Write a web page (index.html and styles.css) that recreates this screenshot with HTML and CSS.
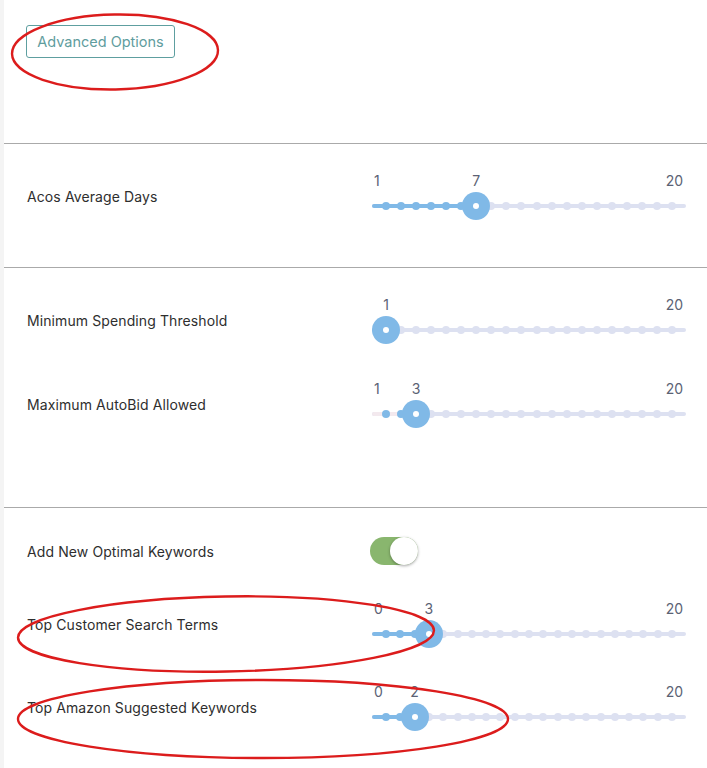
FILE: index.html
```html
<!DOCTYPE html>
<html lang="en">
<head>
    <meta charset="UTF-8">
    <meta name="viewport" content="width=device-width, initial-scale=1.0">
    <title>Advanced Options</title>
    <link rel="stylesheet" href="styles.css">
</head>
<body>
    <div class="panel">
        <div class="section top-section">
            <button class="advanced-button">Advanced Options</button>
        </div>

        <div class="section acos-section">
            <div class="setting-row">
                <span class="setting-label">Acos Average Days</span>
                <div class="slider" data-min="1" data-max="20" data-value="7"></div>
            </div>
        </div>

        <div class="section limits-section">
            <div class="setting-row">
                <span class="setting-label">Minimum Spending Threshold</span>
                <div class="slider" data-min="1" data-max="20" data-value="1"></div>
            </div>
            <div class="setting-row">
                <span class="setting-label">Maximum AutoBid Allowed</span>
                <div class="slider faded" data-min="1" data-max="20" data-value="3"></div>
            </div>
        </div>

        <div class="section keywords-section">
            <div class="setting-row toggle-row">
                <span class="setting-label">Add New Optimal Keywords</span>
                <div class="toggle on"></div>
            </div>
            <div class="setting-row">
                <span class="setting-label">Top Customer Search Terms</span>
                <div class="slider" data-min="0" data-max="20" data-value="3"></div>
            </div>
            <div class="setting-row">
                <span class="setting-label">Top Amazon Suggested Keywords</span>
                <div class="slider" data-min="0" data-max="20" data-value="2"></div>
            </div>
        </div>
    </div>

    <!-- review marks drawn over the screenshot -->
    <svg class="annotations" width="707" height="768" viewBox="0 0 707 768">
        <ellipse cx="115" cy="52" rx="103" ry="37.5" transform="rotate(-1 115 52)"/>
        <ellipse cx="226" cy="634" rx="208" ry="37.5" transform="rotate(-1 226 634)"/>
        <ellipse cx="263" cy="719" rx="245" ry="39"/>
    </svg>

    <script src="script.js"></script>
</body>
</html>
```

FILE: styles.css
```css
body {
    margin: 0;
    font-family: Inter, "Liberation Sans", sans-serif;
    font-size: 14px;
    color: #2e2e2e;
    background-color: #f4f4f4;
    position: relative;
}
.panel {
    margin-left: 4px;
    min-height: 100vh;
    background-color: #fff;
}
.section + .section {
    border-top: 1px solid #aaa;
}
.top-section {
    height: 143px;
    box-sizing: border-box;
    padding: 25px 22px;
}
.advanced-button {
    width: 149px;
    height: 33px;
    padding: 0;
    background-color: #fff;
    border: 1px solid #5e9fa0;
    border-radius: 3px;
    color: #5f9d9e;
    font-family: Inter, "Liberation Sans", sans-serif;
    font-size: 14.5px;
    cursor: pointer;
}
.setting-row {
    display: grid;
    grid-template-columns: 345px 314px;
    align-items: center;
    min-height: 48px;
    padding-left: 23px;
}
.setting-label {
    padding-top: 1px;
    letter-spacing: 0.1px;
}
.acos-section {
    padding: 28px 0 47px;
}
.limits-section {
    display: flex;
    flex-direction: column;
    gap: 36px;
    padding: 28px 0 79px;
}
.keywords-section {
    display: flex;
    flex-direction: column;
    gap: 35px;
    padding: 29px 0 0;
}
.toggle-row {
    min-height: 28px;
}
.toggle {
    position: relative;
    width: 48px;
    height: 28px;
    margin-left: -2px;
    border-radius: 14px;
    background-color: #ccc;
}
.toggle.on {
    background-color: #89b66e;
}
.toggle::after {
    content: '';
    position: absolute;
    top: 0;
    left: 0;
    width: 28px;
    height: 28px;
    border-radius: 50%;
    background-color: #fff;
    box-shadow: 0 1px 3px rgba(0, 0, 0, 0.35);
}
.toggle.on::after {
    left: auto;
    right: 0;
}

/* slider */
.slider {
    position: relative;
    height: 48px;
}
.slider-rail,
.slider-fill {
    position: absolute;
    left: 0;
    top: 32px;
    height: 4px;
    border-radius: 2px;
}
.slider-rail {
    right: 0;
    background-color: #dde1f1;
}
.slider-fill {
    background-color: #80b9e7;
}
.slider.faded .slider-fill {
    background-color: #f3e9ee;
}
.slider-dot {
    position: absolute;
    top: 30px;
    width: 8px;
    height: 8px;
    margin-left: -4px;
    border-radius: 50%;
    background-color: #dde1f1;
}
.slider-dot.filled {
    background-color: #80b9e7;
}
.slider-handle {
    position: absolute;
    top: 20px;
    width: 28px;
    height: 28px;
    margin-left: -14px;
    border-radius: 50%;
    background-color: #80b9e7;
}
.slider-handle::after {
    content: '';
    position: absolute;
    left: 11px;
    top: 11px;
    width: 6px;
    height: 6px;
    border-radius: 50%;
    background-color: #fff;
}
.slider-mark {
    position: absolute;
    top: 0;
    line-height: 18px;
    color: #5b6274;
}
.slider-mark.min {
    left: 2px;
}
.slider-mark.max {
    right: 3px;
}
.slider-mark.current {
    transform: translateX(-50%);
}

.annotations {
    position: absolute;
    top: 0;
    left: 0;
    pointer-events: none;
}
.annotations ellipse {
    fill: none;
    stroke: #dc1c1c;
    stroke-width: 2.4;
}
```

FILE: script.js
```js
// build the dotted sliders from their data attributes
document.querySelectorAll('.slider').forEach(function (slider) {
    const min = Number(slider.dataset.min);
    const max = Number(slider.dataset.max);
    const value = Number(slider.dataset.value);

    function pos(v) {
        return 'calc(14px + (100% - 28px) * ' + ((v - min) / (max - min)) + ')';
    }

    function add(cls, left, text) {
        const el = document.createElement('div');
        el.className = cls;
        if (left) el.style.left = left;
        if (text !== undefined) el.textContent = text;
        slider.appendChild(el);
        return el;
    }

    add('slider-rail');
    add('slider-fill').style.width = pos(value);

    for (let v = min; v <= max; v++) {
        if (v === value) continue;
        add('slider-dot' + (v < value ? ' filled' : ''), pos(v));
    }
    add('slider-handle', pos(value));

    if (value !== min) add('slider-mark min', null, min);
    if (value !== max) add('slider-mark max', null, max);
    add('slider-mark current', pos(value), value);
});
```
